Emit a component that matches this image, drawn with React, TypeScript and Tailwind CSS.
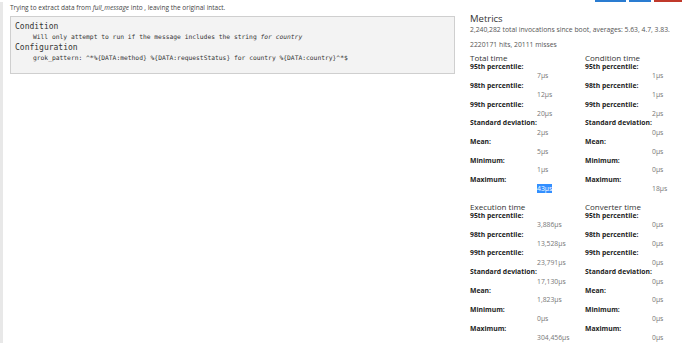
import React from "react";

type Row = [string, string];

const rowsTotal: Row[] = [
  ["95th percentile:", "7μs"],
  ["98th percentile:", "12μs"],
  ["99th percentile:", "20μs"],
  ["Standard deviation:", "2μs"],
  ["Mean:", "5μs"],
  ["Minimum:", "1μs"],
  ["Maximum:", "43μs"],
];
const rowsCond: Row[] = [
  ["95th percentile:", "1μs"],
  ["98th percentile:", "1μs"],
  ["99th percentile:", "2μs"],
  ["Standard deviation:", "0μs"],
  ["Mean:", "0μs"],
  ["Minimum:", "0μs"],
  ["Maximum:", "18μs"],
];
const rowsExec: Row[] = [
  ["95th percentile:", "3,886μs"],
  ["98th percentile:", "13,528μs"],
  ["99th percentile:", "23,791μs"],
  ["Standard deviation:", "17,130μs"],
  ["Mean:", "1,823μs"],
  ["Minimum:", "0μs"],
  ["Maximum:", "304,456μs"],
];
const rowsConv: Row[] = [
  ["95th percentile:", "0μs"],
  ["98th percentile:", "0μs"],
  ["99th percentile:", "0μs"],
  ["Standard deviation:", "0μs"],
  ["Mean:", "0μs"],
  ["Minimum:", "0μs"],
  ["Maximum:", "0μs"],
];

function Block({ title, rows, highlightLast }: { title: string; rows: Row[]; highlightLast?: boolean }) {
  return (
    <div className="w-[115px] shrink-0">
      <div className="text-[8px] leading-[9px] text-[#333]">{title}</div>
      <dl className="text-[6.8px] leading-[9.4px]">
        {rows.map(([k, v], i) => (
          <React.Fragment key={k}>
            <dt className="font-bold text-[#222]">{k}</dt>
            <dd className="ml-[67px] text-[#777]">
              {highlightLast && i === rows.length - 1 ? (
                <span className="bg-[#338fff] text-white">{v}</span>
              ) : (
                v
              )}
            </dd>
          </React.Fragment>
        ))}
      </dl>
    </div>
  );
}

export default function App() {
  return (
    <div className="w-[690px] h-[343px] bg-white overflow-hidden font-['Open_Sans',sans-serif] flex flex-col">
      <div className="h-[2px] flex justify-end pr-[8px] gap-[3px] shrink-0">
        <div className="w-[31px] bg-[#2a7cd1]" />
        <div className="w-[22px] bg-[#2a7cd1]" />
        <div className="w-[28px] bg-[#c0392b]" />
      </div>
      <div className="flex flex-1">
        <div className="w-[460px] shrink-0 border-l-[3px] border-[#e8e8e8] pl-[7px] pr-[5px]">
          <p className="text-[6.5px] leading-[9px] text-[#444] mt-[1px]">
            Trying to extract data from <em>full_message</em> into , leaving the original intact.
          </p>
          <div className="mt-[4px] bg-[#f3f3f3] border border-[#cfcfcf] px-[4px] pt-[5px] pb-[11px] font-['DejaVu_Sans_Mono',monospace] text-[#333]">
            <div className="text-[8px] leading-[10px]">Condition</div>
            <div className="text-[6.3px] leading-[9px] pl-[18px]">
              Will only attempt to run if the message includes the string <em>for country</em>
            </div>
            <div className="text-[8px] leading-[10px] mt-[2px]">Configuration</div>
            <div className="text-[6.3px] leading-[9px] pl-[18px]">
              grok_pattern: ^*%{"{"}DATA:method{"}"} %{"{"}DATA:requestStatus{"}"} for country %{"{"}DATA:country{"}"}^*$
            </div>
          </div>
        </div>
        <div className="pl-[10px] pt-[11px] text-[#333]">
          <div className="text-[9.5px] leading-[12px]">Metrics</div>
          <div className="text-[6.8px] leading-[9px] text-[#555]">
            2,240,282 total invocations since boot, averages: 5.63, 4.7, 3.83.
          </div>
          <div className="text-[6.8px] leading-[9px] text-[#555] mt-[6px]">2220171 hits, 20111 misses</div>
          <div className="flex mt-[4px]">
            <Block title="Total time" rows={rowsTotal} highlightLast />
            <Block title="Condition time" rows={rowsCond} />
          </div>
          <div className="flex mt-[8px]">
            <Block title="Execution time" rows={rowsExec} />
            <Block title="Converter time" rows={rowsConv} />
          </div>
        </div>
      </div>
    </div>
  );
}
